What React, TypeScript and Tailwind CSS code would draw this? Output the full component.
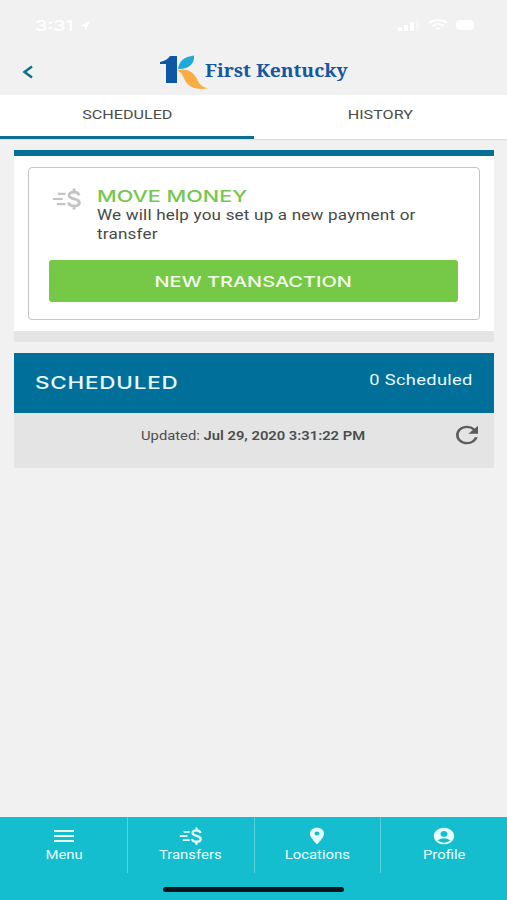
import clsx from "clsx";
import type { ReactNode } from "react";
import { MdAccountCircle, MdPlace, MdRefresh } from "react-icons/md";

function MoneyIcon({ className }: { className?: string }) {
  return (
    <svg viewBox="0 0 30 24" preserveAspectRatio="none" fill="none" stroke="currentColor" className={className}>
      <path d="M6 6.5h8M1 12h10M5 17.5h9" strokeWidth="2.4" />
      <path
        d="M28 8C27.5 5.700 25.500 4.500 22.700 4.500C19.800 4.500 17.700 5.900 17.700 8.100C17.700 13 28.300 10.700 28.300 15.900C28.300 18.200 26 19.600 22.900 19.600C19.700 19.600 17.400 18.200 17.100 15.700M22.800 0.500v4M22.800 19.500v4"
        strokeWidth="3"
      />
    </svg>
  );
}

function Logo() {
  return (
    <div className="flex h-9 w-[190px] items-start gap-1 text-[#17579f]">
      <svg viewBox="0 0 50 36" className="h-9 w-[50px] shrink-0" role="img" aria-label="1K">
        <path d="M1 8C6 7 9 5 11 2h7v27H7V10H1z" fill="#0d57a5" />
        <path d="M19 15C20 7 25 3 35 1.500C36 9 30 15.500 19 15z" fill="#20a9d8" />
        <path d="M18 16.500L23 15.500C30 15 35 19 38 25C40 30 43 33 49 34.500C39 36 31 34 27 28C24 23 23 18 18 16.500z" fill="#f9ad42" />
      </svg>
      <span className="-ml-2 mt-1 origin-left scale-x-[1.07] whitespace-nowrap font-['Noto_Serif','Liberation_Serif',serif] text-[18px]/6 font-bold">
        First Kentucky
      </span>
    </div>
  );
}

function StatusBar() {
  return (
    <div className="flex h-12 items-start justify-between pt-[17px] pr-[33px] pl-[35px] text-white">
      <div className="flex items-center gap-1">
        <span className="w-10 font-[Inter,sans-serif] text-[15px]/[18px] font-medium">
          <span className="inline-block origin-left scale-x-[1.3]">3:31</span>
        </span>
        <svg viewBox="0 0 12 10" className="h-2.5 w-3" fill="currentColor">
          <path d="M1 5L11 0L6.500 10L6 5.500z" />
        </svg>
      </div>
      <div className="flex items-center gap-2 pt-0.5">
        <svg viewBox="0 0 22 12" className="h-3 w-[22px]" fill="currentColor">
          <path d="M0 8h4v4H0zM6 6h4v6H6zM12 3h4v9h-4z" />
          <path d="M18 0h3v12h-3z" opacity=".4" />
        </svg>
        <svg viewBox="0 0 20 12" className="h-3 w-5" fill="none" stroke="currentColor" strokeWidth="2">
          <path d="M1 4C6 0 14 0 19 4M4.500 7C8 4.500 12 4.500 15.500 7M8 10c1.500-1 2.500-1 4 0" />
        </svg>
        <span className="h-2.5 w-[18px] rounded-sm bg-white" />
      </div>
    </div>
  );
}

function Tab({ active, children }: { active?: boolean; children: ReactNode }) {
  return (
    <button
      className={clsx(
        "flex-1 pb-1 text-center text-[13px] text-[#4c4c4c]",
        active && "border-b-[3px] border-[#0c6c92] pb-px pl-px",
      )}
    >
      <span className="inline-block scale-x-[1.24]">{children}</span>
    </button>
  );
}

function NavItem({ icon, label }: { icon: ReactNode; label: string }) {
  return (
    <a className="flex h-14 flex-1 flex-col items-center border-r border-[#55d2dc] pt-[9px] last:border-r-0">
      <span className="flex h-5 items-center justify-center">{icon}</span>
      <span className="mt-0.5 scale-x-[1.24] text-[12px]/[14px]">{label}</span>
    </a>
  );
}

export default function App() {
  return (
    <div className="flex h-[900px] w-[507px] flex-col overflow-hidden bg-[#f1f1f1] font-[Roboto,sans-serif]">
      <header className="h-[95px] shrink-0">
        <StatusBar />
        <div className="flex items-start">
          <button className="ml-[22px] mt-[17px] w-[137px] text-[#0c7191]">
            <svg viewBox="0 0 12 14" className="h-3.5 w-3" fill="none" stroke="currentColor" strokeWidth="2.500">
              <path d="M10 1.500L2.500 7L10 12.500" />
            </svg>
          </button>
          <div className="mt-1.5">
            <Logo />
          </div>
        </div>
      </header>

      <nav className="flex h-11 shrink-0 bg-white shadow-[0_1px_1px_#dedede]">
        <Tab active>SCHEDULED</Tab>
        <Tab>HISTORY</Tab>
      </nav>

      <main className="flex flex-1 flex-col gap-[11px] pt-[11px] pr-[13px] pl-3.5">
        <section className="rounded-b-xs border-t-6 border-b-11 border-t-[#046f97] border-b-[#e4e4e4] bg-white px-3.5 py-[11px]">
          <div className="h-[153px] rounded-[4px] border border-[#c5c5c5] px-5 pt-[18px]">
            <div className="flex h-[74px]">
              <MoneyIcon className="mt-0.5 ml-[3px] h-[22px] w-[29px] text-[#c4c4c4]" />
              <div className="ml-4">
                <h2 className="origin-left scale-x-[1.35] whitespace-nowrap font-[Inter,sans-serif] text-[16px]/5 font-medium text-[#76c652]">
                  MOVE MONEY
                </h2>
                <p className="w-[270px] origin-left scale-x-[1.22] text-[14px]/[19px] tracking-[0.15px] text-[#484848]">
                  We will help you set up a new payment or transfer
                </p>
              </div>
            </div>
            <button className="h-[42px] w-[409px] rounded-[3px] bg-[#76c946] pt-0.5 font-[Inter,sans-serif] text-[15px] font-medium text-[#f4ffec]">
              <span className="inline-block scale-x-[1.33]">NEW TRANSACTION</span>
            </button>
          </div>
        </section>

        <section className="h-[115px] rounded-b-xs bg-[#e4e4e4]">
          <div className="flex h-[60px] items-center justify-between bg-[#00709a] px-[21px] text-[#e9faff]">
            <h2 className="mt-0.5 origin-left scale-x-[1.32] font-[Inter,sans-serif] text-[17px] font-medium tracking-[0.6px]">
              SCHEDULED
            </h2>
            <span className="-mt-1.5 origin-right scale-x-[1.22] text-[15px] tracking-[0.25px]">0 Scheduled</span>
          </div>
          <div className="flex h-[46px] items-center text-[#4d4d4d]">
            <p className="ml-[100px] w-[279px] text-center text-[12px]">
              <span className="inline-block scale-x-[1.23] whitespace-nowrap">
                Updated: <b className="font-semibold">Jul 29, 2020 3:31:22 PM</b>
              </span>
            </p>
            <MdRefresh className="-mt-[3px] ml-[60px] h-[28px] w-[28px] scale-x-[1.18] text-[#5c5c5c]" />
          </div>
        </section>
      </main>

      <footer className="h-[83px] shrink-0 bg-[#14bece] text-[#e8ffff]">
        <div className="flex pl-px">
          <NavItem
            label="Menu"
            icon={
              <svg viewBox="0 0 20 12" className="h-3 w-5" stroke="currentColor" strokeWidth="2">
                <path d="M0 1h20M0 6h20M0 11h20" />
              </svg>
            }
          />
          <NavItem label="Transfers" icon={<MoneyIcon className="h-[18px] w-[23px]" />} />
          <NavItem label="Locations" icon={<MdPlace className="size-5 scale-x-[1.22]" />} />
          <NavItem label="Profile" icon={<MdAccountCircle className="size-5 scale-x-[1.22]" />} />
        </div>
        <div className="mx-auto mt-3.5 h-[5px] w-[181px] rounded-full bg-[#07161a]" />
      </footer>
    </div>
  );
}
